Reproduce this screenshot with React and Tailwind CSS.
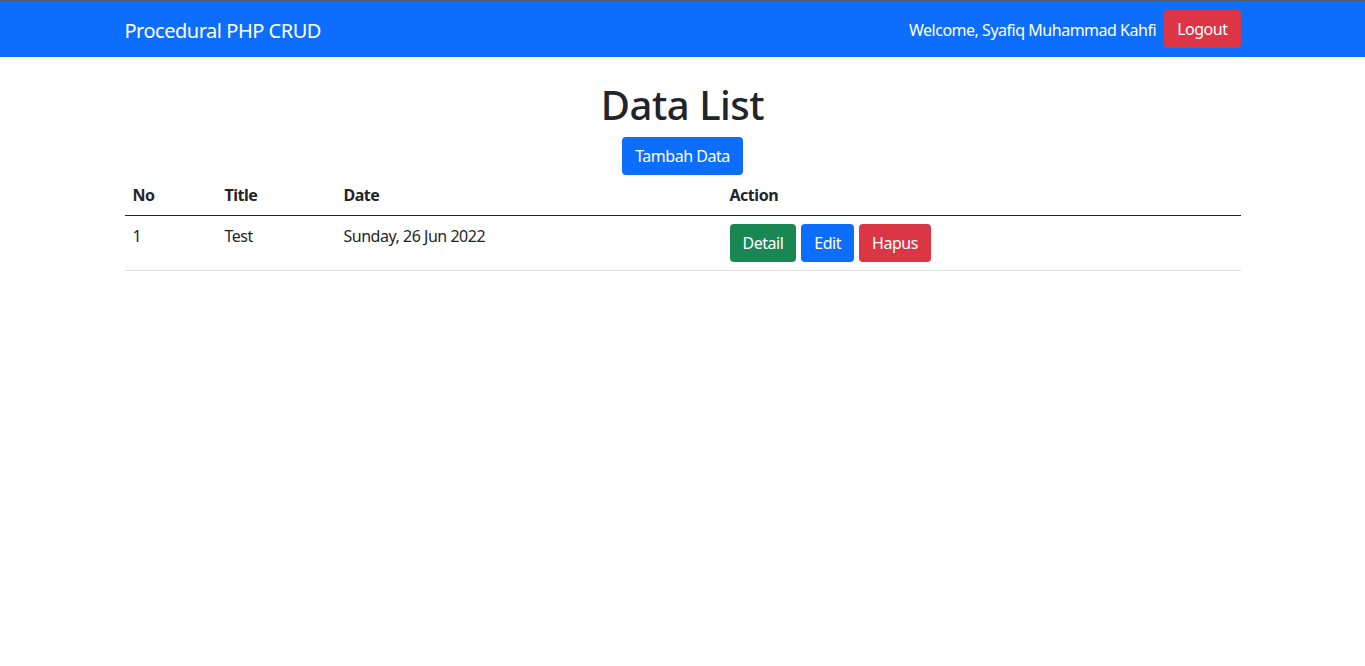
import React from "react";

const font = { fontFamily: '"Noto Sans", "Open Sans", "Liberation Sans", sans-serif' };

function Btn({ color, children }) {
  return (
    <button
      className={`${color} inline-block text-white text-[16px] leading-[24px] px-3 py-[6px] rounded-[4px] border border-transparent tracking-[-0.03em]`}
    >
      {children}
    </button>
  );
}

export default function App() {
  return (
    <div className="min-h-[666px] bg-white text-[#212529] text-[16px] leading-[24px] tracking-[-0.03em]" style={font}>
      <nav className="bg-[#0d6efd] border-t border-[#4f5b6b] py-2">
        <div className="mx-auto max-w-[1140px] px-3 flex items-center justify-between">
          <a className="text-white text-[20px] leading-[30px] pt-[7px] pb-[3px]">Procedural PHP CRUD</a>
          <div className="flex items-center">
            <span className="text-white mr-2 pt-[2px]">Welcome, Syafiq Muhammad Kahfi</span>
            <Btn color="bg-[#dc3545]">Logout</Btn>
          </div>
        </div>
      </nav>
      <div className="mx-auto max-w-[1140px] px-3">
        <h1 className="mt-6 mb-2 text-center text-[40px] leading-[48px] font-medium">Data List</h1>
        <div className="flex justify-center">
          <Btn color="bg-[#0d6efd]">Tambah Data</Btn>
        </div>
        <table className="w-full border-collapse text-left">
          <thead>
            <tr className="border-b border-[#212529]">
              <th className="w-[92px] p-2 font-bold">No</th>
              <th className="w-[119px] p-2 font-bold">Title</th>
              <th className="w-[386px] p-2 font-bold">Date</th>
              <th className="p-2 font-bold">Action</th>
            </tr>
          </thead>
          <tbody>
            <tr className="border-b border-[#dee2e6]">
              <td className="p-2 align-top">1</td>
              <td className="p-2 align-top">Test</td>
              <td className="p-2 align-top">Sunday, 26 Jun 2022</td>
              <td className="p-2 align-top">
                <div className="flex gap-[5px]">
                  <Btn color="bg-[#198754]">Detail</Btn>
                  <Btn color="bg-[#0d6efd]">Edit</Btn>
                  <Btn color="bg-[#dc3545]">Hapus</Btn>
                </div>
              </td>
            </tr>
          </tbody>
        </table>
      </div>
    </div>
  );
}
